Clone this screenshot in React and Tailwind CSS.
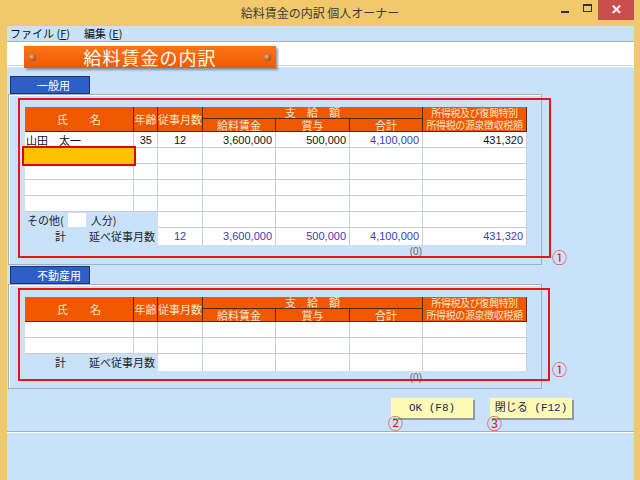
const jp = { fontFamily: '"Noto Sans CJK JP", "Liberation Sans", sans-serif' };
const num = { fontFamily: '"Liberation Sans", "Noto Sans CJK JP", sans-serif' };
const mono = { fontFamily: '"Liberation Mono", "Noto Sans CJK JP", monospace' };

const cols = "grid grid-cols-[109px_24px_45px_73px_74px_73px_104px]";

const H = ({ className = "", children }) => (
  <div
    className={`flex items-center justify-center bg-[#f05800] text-[#ffe6cc] border-r border-b border-[#5a2806] ${className}`}
  >
    {children}
  </div>
);

const Header = () => (
  <div className={`${cols} grid-rows-[12px_13px] text-[11px] leading-none`}>
    <H className="row-span-2">氏　　名</H>
    <H className="row-span-2">年齢</H>
    <H className="row-span-2">従事月数</H>
    <H className="col-span-3">支　給　額</H>
    <H className="row-span-2 flex-col">
      <span className="text-[10px] leading-[12px] whitespace-nowrap tracking-[-0.4px]">所得税及び復興特別</span>
      <span className="text-[10px] leading-[12px] whitespace-nowrap tracking-[-0.4px]">所得税の源泉徴収税額</span>
    </H>
    <H>給料賃金</H>
    <H>賞与</H>
    <H>合計</H>
  </div>
);

const D = ({ className = "", children }) => (
  <div
    className={`h-[16px] bg-white border-r border-b border-[#c6cedc] text-[11px] leading-[16px] ${className}`}
    style={num}
  >
    {children}
  </div>
);

const EmptyRow = () => (
  <div className={cols}>
    <D />
    <D />
    <D />
    <D />
    <D />
    <D />
    <D />
  </div>
);

const TotalRow = ({ values }) => (
  <div className={`${cols} h-[17px] text-[11px]`}>
    <div className="col-span-2 flex items-center text-[#222]" style={jp}>
      <span className="ml-[30px]">計</span>
      <span className="ml-auto mr-[3px]">延べ従事月数</span>
    </div>
    {values.map((v, i) => (
      <div
        key={i}
        className={`h-[17px] bg-white border-r border-[#c6cedc] leading-[17px] text-[#3b3bb8] ${
          i === 0 ? "text-center" : "text-right pr-[3px]"
        }`}
        style={num}
      >
        {v}
      </div>
    ))}
  </div>
);

const Tab = ({ label }) => (
  <div
    className="ml-[2px] w-[80px] h-[18px] bg-[#2d5fc6] border border-[#1c3470] text-white text-[11px] leading-[16px] pl-[26px]"
    style={jp}
  >
    {label}
  </div>
);

const Circled = ({ n, className = "" }) => (
  <span
    className={`absolute text-[#e01818] text-[15px] leading-none ${className}`}
    style={jp}
  >
    {n}
  </span>
);

const Button = ({ label, n }) => (
  <div className="relative">
    <div
      className="w-[82px] h-[20px] bg-[#fffab6] shadow-[2px_2px_0_#8d9cab] flex items-center justify-center text-[11px] text-[#1c1c5c]"
      style={mono}
    >
      {label}
    </div>
    <Circled n={n} className="left-[-3px] top-[17px]" />
  </div>
);

const Bolt = () => (
  <div className="w-[7px] h-[7px] rounded-full bg-[radial-gradient(circle_at_35%_35%,#f0b080,#7a2a08)]" />
);

export default function App() {
  return (
    <div className="w-[640px] h-[480px] bg-[#f1c86c] flex flex-col overflow-hidden" style={jp}>
      {/* title bar */}
      <div className="h-[26px] relative flex items-center justify-center shrink-0">
        <span className="text-[12px] text-[#3a3a3a]">給料賃金の内訳 個人オーナー</span>
        <div className="absolute right-[6px] top-0 flex items-start">
          <div className="w-[22px] h-[20px] flex items-center justify-center">
            <div className="w-[8px] h-[2px] bg-[#333] mt-[3px]" />
          </div>
          <div className="w-[22px] h-[20px] flex items-center justify-center">
            <div className="w-[9px] h-[8px] border border-[#333] border-t-2 mb-[4px]" />
          </div>
          <div className="w-[36px] h-[20px] bg-[#c94f4f] flex items-center justify-center text-white text-[13px] font-bold" style={num}>
            ✕
          </div>
        </div>
      </div>

      <div className="ml-[7px] mr-[6px] flex-1 flex flex-col bg-[#c9e1f9]">
        {/* menu */}
        <div className="h-[16px] bg-[#c8e2fa] border-b border-[#a3b3c4] flex items-center text-[11px] text-[#111] pl-[3px] gap-[14px]">
          <span>ファイル (<u>F</u>)</span>
          <span>編集 (<u>E</u>)</span>
        </div>

        {/* banner area */}
        <div className="h-[23px] bg-white relative">
          <div className="absolute z-10 left-[17px] top-[4px] w-[252px] h-[22px] bg-gradient-to-b from-[#ff7418] to-[#ec5a00] shadow-[2px_2px_2px_rgba(80,80,80,0.55)] flex items-center px-[5px]">
            <Bolt />
            <span className="flex-1 text-center text-white text-[18px] leading-none tracking-[1px]">給料賃金の内訳</span>
            <Bolt />
          </div>
        </div>
        <div className="h-px bg-[#c8e2fa]" />
        <div className="h-px bg-white" />
        <div className="h-px bg-[#d6eafc]" />

        {/* body */}
        <div className="flex-1 flex flex-col pl-[1px] pt-[8px]">
          <Tab label="一般用" />
          <div className="relative w-[534px] h-[171px] border border-[#9db0c4] shadow-[inset_1px_1px_0_#fff] pt-[12px] pl-[16px]">
            <Header />
            <div className={`${cols} text-[#111]`}>
              <D className="pl-[1px]">
                <span style={jp}>山田　太一</span>
              </D>
              <D className="text-right pr-[5px]">35</D>
              <D className="text-center">12</D>
              <D className="text-right pr-[3px]">3,600,000</D>
              <D className="text-right pr-[3px]">500,000</D>
              <D className="text-right pr-[3px] !text-[#3b3bb8]">4,100,000</D>
              <D className="text-right pr-[3px]">431,320</D>
            </div>
            <div className={cols}>
              <div className="h-[16px] bg-[#ffc000] shadow-[0_0_0_2px_#e00000] relative z-[1] ml-[-1px]" />
              <D />
              <D />
              <D />
              <D />
              <D />
              <D />
            </div>
            <EmptyRow />
            <EmptyRow />
            <EmptyRow />
            <div className={`${cols} h-[16px]`}>
              <div className="col-span-2 flex items-center text-[11px] text-[#222]">
                <span className="ml-[2px]">その他(</span>
                <div className="ml-[4px] w-[18px] h-[14px] bg-white" />
                <span className="ml-[5px]">人分)</span>
              </div>
              <D />
              <D />
              <D />
              <D />
              <D />
            </div>
            <TotalRow values={["12", "3,600,000", "500,000", "4,100,000", "431,320"]} />
            <div className="w-[502px] text-right pr-[105px] text-[10px] leading-[14px] text-[#666]" style={num}>
              (0)
            </div>
            <div className="absolute left-[9px] top-[3px] w-[533px] h-[160px] border-2 border-[#e8141c] pointer-events-none" />
            <Circled n="①" className="left-[543px] top-[154px]" />
          </div>

          <div className="mt-px">
            <Tab label="不動産用" />
          </div>
          <div className="relative w-[534px] h-[105px] border border-[#9db0c4] shadow-[inset_1px_1px_0_#fff] pt-[12px] pl-[16px]">
            <Header />
            <EmptyRow />
            <EmptyRow />
            <TotalRow values={["", "", "", "", ""]} />
            <div className="w-[502px] text-right pr-[105px] text-[10px] leading-[14px] text-[#666]" style={num}>
              (0)
            </div>
            <div className="absolute left-[9px] top-[3px] w-[532px] h-[93px] border-2 border-[#e8141c] pointer-events-none" />
            <Circled n="①" className="left-[543px] top-[76px]" />
          </div>

          <div className="mt-[9px] ml-[383px] flex gap-[17px]">
            <Button label="OK (F8)" n="②" />
            <Button label="閉じる (F12)" n="③" />
          </div>

          <div className="mt-[13px] ml-[-1px] h-px bg-[#9fb0c2]" />
          <div className="ml-[-1px] h-px bg-white" />
        </div>
      </div>
    </div>
  );
}
